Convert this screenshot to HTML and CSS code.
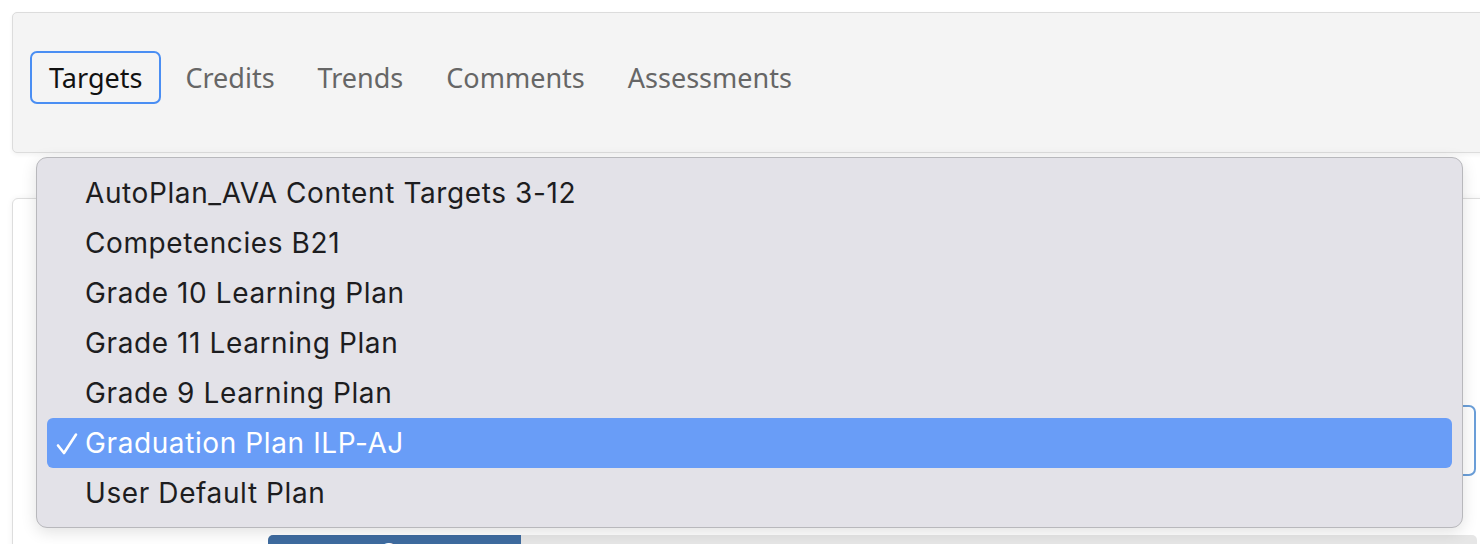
FILE: index.html
```html
<!DOCTYPE html>
<html lang="en">
<head>
<meta charset="utf-8">
<title>Targets</title>
<link rel="stylesheet" href="styles.css">
</head>
<body>
<div class="tabcard">
  <nav class="tabs">
    <span class="tab active">Targets</span>
    <span class="tab">Credits</span>
    <span class="tab">Trends</span>
    <span class="tab">Comments</span>
    <span class="tab">Assessments</span>
  </nav>
</div>
<div class="content">
  <div class="select-row">
    <div class="select">
      <span class="select-text">Graduation Plan ILP-AJ</span>
      <svg class="chev" width="12" height="8" viewBox="0 0 12 8"><path d="M1 1.5 L6 6.5 L11 1.5" fill="none" stroke="#333" stroke-width="1.6"/></svg>
    </div>
  </div>
  <div class="progress">
    <div class="progress-fill"><span>Save</span></div>
  </div>
</div>
<ul class="menu">
  <li class="item">AutoPlan_AVA Content Targets 3-12</li>
  <li class="item">Competencies B21</li>
  <li class="item">Grade 10 Learning Plan</li>
  <li class="item">Grade 11 Learning Plan</li>
  <li class="item">Grade 9 Learning Plan</li>
  <li class="item selected"><svg class="check" width="22" height="24" viewBox="0 0 22 24"><path d="M2 13.5 L8 21 L20 2.5" fill="none" stroke="#ffffff" stroke-width="2.6" stroke-linecap="round" stroke-linejoin="round"/></svg>Graduation Plan ILP-AJ</li>
  <li class="item">User Default Plan</li>
</ul>
</body>
</html>
```
FILE: styles.css
```css
html, body {
  margin: 0;
  padding: 0;
  background: #ffffff;
  overflow: hidden;
  width: 1480px;
  height: 544px;
}
body {
  position: relative;
  font-family: "Noto Sans", "Open Sans", sans-serif;
}
.tabcard {
  box-sizing: border-box;
  margin: 12px 0 0 12px;
  width: 1500px;
  height: 141px;
  background: #f4f4f4;
  border: 1px solid #dcdcdc;
  border-radius: 5px;
  box-shadow: 0 2px 4px rgba(0,0,0,0.05);
  padding: 38px 0 0 17px;
}
.tabs {
  display: flex;
  gap: 5px;
}
.tab {
  box-sizing: border-box;
  height: 53px;
  display: flex;
  align-items: center;
  padding: 0 17px 1px;
  border: 2px solid transparent;
  border-radius: 7px;
  font-size: 27px;
  color: #666666;
}
.tab.active {
  color: #111111;
  border-color: #4a8ef3;
}
.content {
  box-sizing: border-box;
  margin: 45px 0 0 12px;
  width: 1480px;
  height: 400px;
  background: #ffffff;
  border: 1px solid #dddddd;
  border-radius: 6px;
  box-shadow: 0 0 6px rgba(0,0,0,0.06);
}
.select-row {
  display: flex;
  justify-content: flex-end;
  padding: 206px 15px 0 0;
}
.select {
  box-sizing: border-box;
  width: 300px;
  height: 71px;
  border: 2px solid #6b9fd9;
  border-radius: 7px;
  display: flex;
  align-items: center;
  justify-content: space-between;
  padding: 0 10px 0 16px;
  font-size: 22px;
  color: #333;
}
.chev { transform: rotate(-20deg); }
.progress {
  margin: 59px 0 0 255px;
  width: 1209px;
  height: 40px;
  background: #e6e6e6;
  border-radius: 5px;
  display: flex;
  overflow: hidden;
}
.progress-fill {
  width: 253px;
  background: #3e6b9f;
  color: #fff;
  font-size: 22px;
  line-height: 30px;
  padding: 0 0 0 114px;
  box-sizing: border-box;
}
.menu {
  position: absolute;
  left: 36px;
  top: 157px;
  box-sizing: border-box;
  width: 1427px;
  height: 371px;
  margin: 0;
  padding: 10px 10px 0 10px;
  list-style: none;
  background: #e3e2e8;
  border: 1px solid #b8b8bc;
  border-radius: 11px;
  box-shadow: 0 4px 16px rgba(0,0,0,0.12);
  font-family: "Inter", "Roboto", sans-serif;
}
.item {
  position: relative;
  height: 50px;
  display: flex;
  align-items: center;
  padding-left: 38px;
  font-size: 28px;
  letter-spacing: 0.6px;
  color: #1d1d1f;
  border-radius: 6px;
}
.item.selected {
  background: #699df7;
  color: #ffffff;
}
.check {
  position: absolute;
  left: 9px;
  top: 14px;
}
```
